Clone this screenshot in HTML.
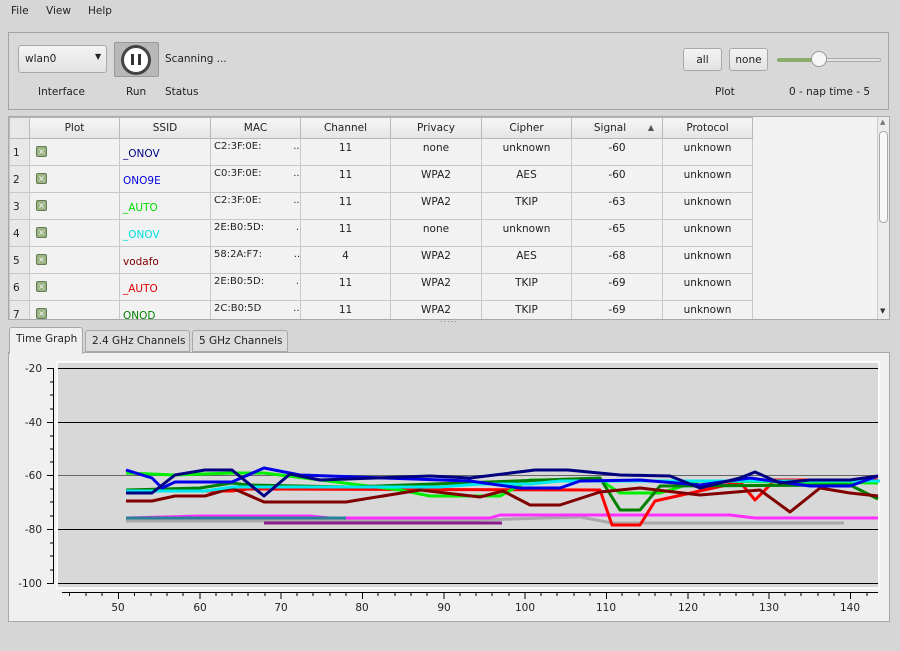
<!DOCTYPE html>
<html><head><meta charset="utf-8"><style>
*{box-sizing:border-box}
body{margin:0;width:900px;height:651px;background:#d6d6d6;font-family:"DejaVu Sans","Liberation Sans",sans-serif;font-size:10.5px;color:#222;position:relative;overflow:hidden}
.a{position:absolute;white-space:nowrap}
.btn{position:absolute;border:1px solid #a8a8a8;border-radius:3px;background:linear-gradient(#f4f4f4,#e2e2e2);text-align:center}
.tw{position:absolute;left:9px;top:117px;width:868px;height:202px;overflow:hidden}
table{border-collapse:collapse;table-layout:fixed;width:743px}
td,th{border:1px solid #c8c8c8;padding:0;font-weight:normal;overflow:hidden;white-space:nowrap}
th{height:21px;background:linear-gradient(#f6f6f6,#e4e4e4);border-color:#b8b8b8}
td{height:27px;background:#f2f2f2;vertical-align:top;text-align:center;padding-top:3px}
td.n{background:#e8e8e8;text-align:left;padding:8px 0 0 3px}
td.p{text-align:left;padding:6px 0 0 6px}
td.s{text-align:left;padding:9px 0 0 3px}
td.m{text-align:left;padding:2px 0 0 3px;font-size:10px}
.cb{display:inline-block;width:11px;height:11px;background:#9cb486;border:1px solid #627a50;border-radius:2px;color:#fff;font-size:8px;line-height:9px;text-align:center}
</style></head><body>
<div class="a" style="left:11px;top:5px">File</div>
<div class="a" style="left:46px;top:5px">View</div>
<div class="a" style="left:88px;top:5px">Help</div>

<div class="a" style="left:8px;top:32px;width:881px;height:78px;border:1px solid #a4a4a4;background:#d8d8d8"></div>
<div class="btn" style="left:18px;top:45px;width:89px;height:28px;text-align:left;padding:7px 0 0 6px">wlan0<span style="position:absolute;left:76px;top:6px;font-size:8px">▼</span></div>
<div class="a" style="left:114px;top:42px;width:45px;height:35px;border:1px solid #999;background:#b8b8b8;border-radius:2px"></div>
<div class="a" style="left:121px;top:45px;width:30px;height:30px;border-radius:50%;background:#fff;border:3px solid #444"></div>
<div class="a" style="left:131px;top:54px;width:3px;height:11px;background:#333"></div>
<div class="a" style="left:138px;top:54px;width:3px;height:11px;background:#333"></div>
<div class="a" style="left:165px;top:53px">Scanning ...</div>
<div class="a" style="left:38px;top:86px">Interface</div>
<div class="a" style="left:126px;top:86px">Run</div>
<div class="a" style="left:165px;top:86px">Status</div>
<div class="btn" style="left:683px;top:48px;width:39px;height:23px;padding-top:5px">all</div>
<div class="btn" style="left:729px;top:48px;width:39px;height:23px;padding-top:5px">none</div>
<div class="a" style="left:777px;top:58px;width:104px;height:4px;border:1px solid #aaa;border-radius:2px;background:#e4e4e4"></div>
<div class="a" style="left:777px;top:58px;width:42px;height:4px;border-radius:2px;background:#8aad6a"></div>
<div class="a" style="left:811px;top:51px;width:16px;height:16px;border-radius:50%;background:#f6f6f6;border:1px solid #999"></div>
<div class="a" style="left:715px;top:86px">Plot</div>
<div class="a" style="left:789px;top:86px">0 - nap time - 5</div>

<div class="a" style="left:8px;top:116px;width:882px;height:204px;border:1px solid #a8a8a8;background:#f2f2f2"></div>
<div class="tw">
<table>
<colgroup><col style="width:20px"><col style="width:90px"><col style="width:91px"><col style="width:90px"><col style="width:90px"><col style="width:91px"><col style="width:90px"><col style="width:91px"><col style="width:90px"></colgroup>
<tr><th style="background:#e8e8e8"></th><th>Plot</th><th>SSID</th><th>MAC</th><th>Channel</th><th>Privacy</th><th>Cipher</th><th style="position:relative;padding-right:14px">Signal<span style="position:absolute;right:8px;top:5px;font-size:8px;color:#555">▲</span></th><th>Protocol</th></tr>
<tr><td class="n">1</td><td class="p"><span class="cb">×</span></td><td class="s" style="color:#000080">_ONOV</td><td class="m">C2:3F:0E:&nbsp;&nbsp;&nbsp;&nbsp;&nbsp;&nbsp;&nbsp;&nbsp;&nbsp;&nbsp;..</td><td>11</td><td>none</td><td>unknown</td><td>-60</td><td>unknown</td></tr>
<tr><td class="n">2</td><td class="p"><span class="cb">×</span></td><td class="s" style="color:#0000e0">ONO9E</td><td class="m">C0:3F:0E:&nbsp;&nbsp;&nbsp;&nbsp;&nbsp;&nbsp;&nbsp;&nbsp;&nbsp;&nbsp;..</td><td>11</td><td>WPA2</td><td>AES</td><td>-60</td><td>unknown</td></tr>
<tr><td class="n">3</td><td class="p"><span class="cb">×</span></td><td class="s" style="color:#00dd00">_AUTO</td><td class="m">C2:3F:0E:&nbsp;&nbsp;&nbsp;&nbsp;&nbsp;&nbsp;&nbsp;&nbsp;&nbsp;&nbsp;..</td><td>11</td><td>WPA2</td><td>TKIP</td><td>-63</td><td>unknown</td></tr>
<tr><td class="n">4</td><td class="p"><span class="cb">×</span></td><td class="s" style="color:#00e0e0">_ONOV</td><td class="m">2E:B0:5D:&nbsp;&nbsp;&nbsp;&nbsp;&nbsp;&nbsp;&nbsp;&nbsp;&nbsp;&nbsp;..</td><td>11</td><td>none</td><td>unknown</td><td>-65</td><td>unknown</td></tr>
<tr><td class="n">5</td><td class="p"><span class="cb">×</span></td><td class="s" style="color:#800000">vodafo</td><td class="m">58:2A:F7:&nbsp;&nbsp;&nbsp;&nbsp;&nbsp;&nbsp;&nbsp;&nbsp;&nbsp;&nbsp;...</td><td>4</td><td>WPA2</td><td>AES</td><td>-68</td><td>unknown</td></tr>
<tr><td class="n">6</td><td class="p"><span class="cb">×</span></td><td class="s" style="color:#e00000">_AUTO</td><td class="m">2E:B0:5D:&nbsp;&nbsp;&nbsp;&nbsp;&nbsp;&nbsp;&nbsp;&nbsp;&nbsp;&nbsp;..</td><td>11</td><td>WPA2</td><td>TKIP</td><td>-69</td><td>unknown</td></tr>
<tr><td class="n">7</td><td class="p"><span class="cb">×</span></td><td class="s" style="color:#008000">ONOD</td><td class="m">2C:B0:5D&nbsp;&nbsp;&nbsp;&nbsp;&nbsp;&nbsp;&nbsp;&nbsp;&nbsp;&nbsp;..</td><td>11</td><td>WPA2</td><td>TKIP</td><td>-69</td><td>unknown</td></tr>
</table>
</div>
<div class="a" style="left:877px;top:117px;width:12px;height:202px;background:#ececec;border-left:1px solid #ccc"></div>
<div class="a" style="left:879px;top:131px;width:9px;height:92px;border:1px solid #aaa;border-radius:4px;background:#f8f8f8"></div>
<div class="a" style="left:880px;top:118px;font-size:7px;color:#777">▲</div>
<div class="a" style="left:880px;top:307px;font-size:7px;color:#333">▼</div>
<div class="a" style="left:440px;top:315px;font-size:8px;color:#777;letter-spacing:1px">.....</div>

<div class="a" style="left:8px;top:352px;width:882px;height:270px;border:1px solid #a8a8a8;background:#f0f0f0"></div>
<div class="a" style="left:9px;top:327px;width:74px;height:27px;border:1px solid #a8a8a8;border-bottom:none;background:#f0f0f0;border-radius:3px 3px 0 0;padding:5px 0 0 6px">Time Graph</div>
<div class="a" style="left:85px;top:330px;width:105px;height:22px;border:1px solid #a8a8a8;background:#dcdcdc;border-radius:3px 3px 0 0;padding:4px 0 0 6px">2.4 GHz Channels</div>
<div class="a" style="left:192px;top:330px;width:96px;height:22px;border:1px solid #a8a8a8;background:#dcdcdc;border-radius:3px 3px 0 0;padding:4px 0 0 6px">5 GHz Channels</div>

<svg class="a" style="left:0;top:0" width="900" height="651" font-family="DejaVu Sans,Liberation Sans,sans-serif" font-size="10.5" fill="#222">
<rect x="56" y="361" width="824" height="228" fill="#fafafa"/>
<rect x="58" y="363" width="820" height="224" fill="#d8d8d8"/>
<g stroke="#000" stroke-width="1">
<line x1="58" y1="368.5" x2="878" y2="368.5"/><line x1="58" y1="422.5" x2="878" y2="422.5"/>
<line x1="58" y1="475.5" x2="878" y2="475.5" stroke="#666"/><line x1="58" y1="529.5" x2="878" y2="529.5"/><line x1="58" y1="583.5" x2="878" y2="583.5"/>
<line x1="53.5" y1="368" x2="53.5" y2="584"/><line x1="62" y1="592.5" x2="878" y2="592.5"/>
</g>
<g stroke="#000">
<path d="M47 368.5h7M47 422.5h7M47 475.5h7M47 529.5h7M47 583.5h7M50 382h4M50 395h4M50 409h4M50 436h4M50 449h4M50 462h4M50 489h4M50 502h4M50 516h4M50 543h4M50 556h4M50 570h4"/>
<path d="M118.5 592v7M200 592v7M281 592v7M362.5 592v7M444 592v7M525 592v7M606.5 592v7M688 592v7M769 592v7M850.5 592v7"/>
<path d="M69.5 592v4M86 592v4M102 592v4M134.5 592v4M151 592v4M167 592v4M183 592v4M216 592v4M232 592v4M248 592v4M265 592v4M297 592v4M313 592v4M330 592v4M346 592v4M378 592v4M395 592v4M411 592v4M427 592v4M460 592v4M476 592v4M492 592v4M509 592v4M541 592v4M557 592v4M574 592v4M590 592v4M622 592v4M639 592v4M655 592v4M671 592v4M704 592v4M720 592v4M736 592v4M753 592v4M785 592v4M801 592v4M818 592v4M834 592v4M867 592v4"/>
</g>
<g text-anchor="end"><text x="42" y="372">-20</text><text x="42" y="426">-40</text><text x="42" y="479">-60</text><text x="42" y="533">-80</text><text x="42" y="587">-100</text></g>
<g text-anchor="middle"><text x="118" y="611">50</text><text x="200" y="611">60</text><text x="281" y="611">70</text><text x="362" y="611">80</text><text x="444" y="611">90</text><text x="525" y="611">100</text><text x="606" y="611">110</text><text x="688" y="611">120</text><text x="769" y="611">130</text><text x="850" y="611">140</text></g>
<g fill="none" stroke-width="3" stroke-linejoin="round">
<polyline stroke="#aaaaaa" points="126,521 350,521 480,520 580,517 612,523 844,523"/>
<polyline stroke="#ff30ff" points="126,518 200,516 310,516 330,518 490,518 500,515 730,515 755,518 878,518"/>
<polyline stroke="#2a7f9a" points="126,518 346,518"/>
<polyline stroke="#8b1a8b" points="264,523 502,523"/>
<polyline stroke="#ff0000" points="126,491 232,491 248,489 600,490 612,525 640,525 655,501 740,482 755,500 775,480 878,480"/>
<polyline stroke="#00ee00" points="126,473 175,475 232,473 264,473 400,490 430,496 500,496 530,480 600,480 620,493 660,493 700,481 878,483"/>
<polyline stroke="#008000" points="126,490 200,488 232,483 248,485 350,487 600,478 620,510 640,510 660,486 850,485 878,499"/>
<polyline stroke="#800000" points="126,501 152,501 175,496 205,496 232,488 264,502 346,502 420,490 480,497 503,491 530,505 560,505 600,492 640,488 700,495 760,490 790,512 820,488 850,493 878,496"/>
<polyline stroke="#00e8f0" points="126,491 205,491 232,487 440,487 480,484 530,484 560,481 880,481"/>
<polyline stroke="#0000e8" points="126,470 152,478 162,488 175,482 232,482 264,468 300,475 470,481 520,488 560,488 580,481 640,480 700,485 750,478 810,486 850,486 878,476"/>
<polyline stroke="#000080" points="126,493 152,493 175,475 205,470 232,470 264,496 290,474 320,480 430,476 470,478 535,470 568,470 620,475 670,476 700,488 740,478 755,472 780,483 810,480 850,480 878,476"/>
</g>
</svg>
</body></html>
